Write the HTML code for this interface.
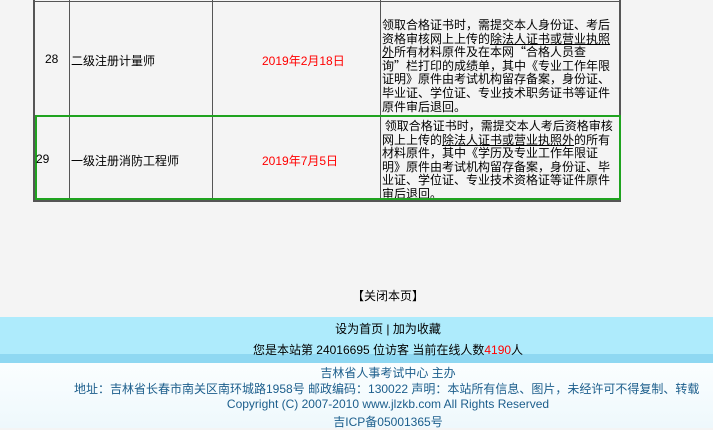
<!DOCTYPE html>
<html><head><meta charset="utf-8"><style>
*{margin:0;padding:0}
body{width:713px;height:430px;background:#f4f4f4;font-family:"Liberation Sans","Noto Sans CJK SC",sans-serif;font-size:12px;color:#000;position:relative;overflow:hidden}
.a{position:absolute}
.v{background:#555}
.r{color:#f00}
.d{line-height:13.6px;width:232px;font-size:12px;font-family:"Noto Sans CJK SC",sans-serif}
u{text-decoration:underline}
.f{left:0;width:776px;text-align:center;font-size:12px}
</style></head><body>
<div class="a v" style="left:33px;top:0;width:2px;height:201px"></div>
<div class="a v" style="left:69px;top:0;width:1px;height:201px"></div>
<div class="a v" style="left:212px;top:0;width:1px;height:201px"></div>
<div class="a v" style="left:380px;top:0;width:1px;height:201px"></div>
<div class="a v" style="left:619px;top:0;width:2px;height:201px"></div>
<div class="a v" style="left:33px;top:1px;width:588px;height:1px"></div>
<div class="a v" style="left:33px;top:200px;width:588px;height:2px"></div>
<div class="a" style="left:35px;top:115px;width:582px;height:81px;border:2px solid #1fa31f"></div>

<div class="a" style="left:45px;top:52px">28</div>
<div class="a" style="left:71px;top:52px">二级注册计量师</div>
<div class="a r" style="left:262px;top:52px">2019年2月18日</div>
<div class="a d" style="left:382px;top:18px">领取合格证书时，需提交本人身份证、考后资格审核网上上传的<u>除法人证书或营业执照外</u>所有材料原件及在本网“合格人员查询”栏打印的成绩单，其中《专业工作年限证明》原件由考试机构留存备案，身份证、毕业证、学位证、专业技术职务证书等证件原件审后退回。</div>

<div class="a" style="left:36px;top:152px">29</div>
<div class="a" style="left:71px;top:152px">一级注册消防工程师</div>
<div class="a r" style="left:262px;top:152px">2019年7月5日</div>
<div class="a d" style="left:382px;top:119px;height:79px;overflow:hidden">&nbsp;领取合格证书时，需提交本人考后资格审核网上上传的<u>除法人证书或营业执照外</u>的所有材料原件，其中《学历及专业工作年限证明》原件由考试机构留存备案，身份证、毕业证、学位证、专业技术资格证等证件原件审后退回。</div>

<div class="a f" style="top:287px">【关闭本页】</div>
<div class="a" style="left:0;top:317px;width:713px;height:37px;background:#aeebfc"></div>
<div class="a" style="left:0;top:354px;width:713px;height:9px;background:#8fd8f2"></div>
<div class="a" style="left:0;top:363px;width:713px;height:65px;background:linear-gradient(#fbfeff,#eef8fc)"></div>
<div class="a f" style="top:320px">设为首页 | 加为收藏</div>
<div class="a f" style="top:341px">您是本站第 24016695 位访客 当前在线人数<span class="r">4190</span>人</div>
<div class="a f" style="top:364px;color:#1c5e8c">吉林省人事考试中心 主办</div>
<div class="a" style="left:74px;top:380px;width:660px;color:#1c5e8c;white-space:nowrap">地址：吉林省长春市南关区南环城路1958号 邮政编码：130022 声明：本站所有信息、图片，未经许可不得复制、转载</div>
<div class="a f" style="top:397px;color:#1c5e8c">Copyright (C) 2007-2010 www.jlzkb.com All Rights Reserved</div>
<div class="a f" style="top:413px;color:#1c5e8c">吉ICP备05001365号</div>
</body></html>
